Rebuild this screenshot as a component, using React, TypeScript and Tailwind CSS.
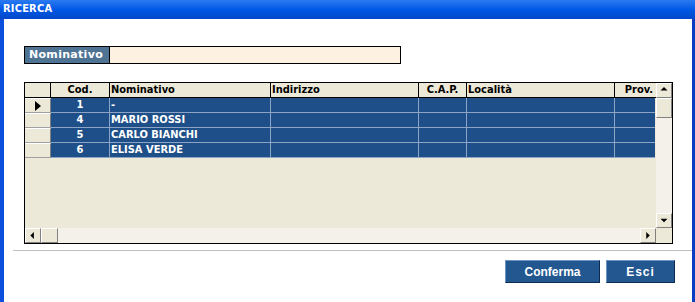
import React from 'react';

interface Row {
  cod: string;
  nome: string;
}

const rows: Row[] = [
  { cod: '1', nome: '-' },
  { cod: '4', nome: 'MARIO ROSSI' },
  { cod: '5', nome: 'CARLO BIANCHI' },
  { cod: '6', nome: 'ELISA VERDE' },
];

const font = { fontFamily: '"DejaVu Sans Condensed", "DejaVu Sans", sans-serif' };

function ScrollButton({ dir }: { dir: 'up' | 'down' | 'left' | 'right' }) {
  const tri =
    dir === 'up'
      ? 'M4 7 L8 3 L12 7 Z'
      : dir === 'down'
      ? 'M4 5 L12 5 L8 9 Z'
      : dir === 'left'
      ? 'M9 3 L9 11 L5 7 Z'
      : 'M6 3 L6 11 L10 7 Z';
  return (
    <div className="w-[16px] h-[15px] shrink-0 bg-[#ece9d8] border-t border-l border-t-white border-l-white border-b border-r border-b-[#808080] border-r-[#808080]">
      <svg width="14" height="13" viewBox="0 0 16 14">
        <path d={tri} fill="#000" />
      </svg>
    </div>
  );
}

export default function App() {
  return (
    <div className="w-[695px] h-[302px] bg-white flex flex-col overflow-hidden" style={font}>
      {/* title bar */}
      <div className="h-[19px] shrink-0 bg-gradient-to-b from-[#2a7af0] via-[#0058e6] to-[#0048c8] flex items-center pl-[3px]">
        <span className="text-white text-[11px] font-bold tracking-[0.2px]">RICERCA</span>
      </div>

      <div className="flex-1 flex">
        <div className="w-[4px] bg-[#0b4fdc]" />
        <div className="flex-1 flex flex-col">
          {/* search field */}
          <div className="mt-[27px] ml-[20px] flex h-[18px]">
            <div
              className="w-[86px] bg-[#4f7393] border border-black text-white text-[11px] font-bold flex items-center pl-[4px] tracking-[0.3px]"
              style={{ fontFamily: '"DejaVu Sans", sans-serif' }}
            >
              Nominativo
            </div>
            <div className="w-[291px] bg-[#fdf2e2] border border-l-0 border-black" />
          </div>

          {/* grid */}
          <div className="mt-[18px] ml-[20px] w-[649px] h-[162px] border border-black flex flex-col bg-[#ece9d8]">
            <div className="flex h-[146px]">
              <div className="flex-1 flex flex-col text-[11px] font-bold">
                <div className="flex h-[15px] border-b border-black">
                  <div className="w-[26px] border-r border-black" />
                  <div className="w-[59px] border-r border-black text-center leading-[14px]">Cod.</div>
                  <div className="w-[161px] border-r border-black pl-[1px] leading-[14px]">Nominativo</div>
                  <div className="w-[148px] border-r border-black pl-[1px] leading-[14px]">Indirizzo</div>
                  <div className="w-[48px] border-r border-black text-center leading-[14px]">C.A.P.</div>
                  <div className="w-[148px] border-r border-black pl-[1px] leading-[14px]">Località</div>
                  <div className="w-[40px] text-right pr-[2px] leading-[14px]">Prov.</div>
                </div>
                {rows.map((r, i) => (
                  <div key={r.cod} className="flex h-[15px]">
                    <div className="w-[26px] bg-[#ece9d8] border-t border-t-white border-b border-b-[#a0a0a0] border-r border-r-[#808080] flex items-center justify-center">
                      {i === 0 && (
                        <svg width="8" height="10" viewBox="0 0 8 10">
                          <path d="M1 0 L7 5 L1 10 Z" fill="#000" />
                        </svg>
                      )}
                    </div>
                    <div className="w-[59px] bg-[#1f4f88] text-white text-center border-r border-b border-[#8ea4c4] leading-[14px]">
                      {r.cod}
                    </div>
                    <div className="w-[161px] bg-[#1f4f88] text-white pl-[1px] border-r border-b border-[#8ea4c4] leading-[14px]">
                      {r.nome}
                    </div>
                    <div className="w-[148px] bg-[#1f4f88] border-r border-b border-[#8ea4c4]" />
                    <div className="w-[48px] bg-[#1f4f88] border-r border-b border-[#8ea4c4]" />
                    <div className="w-[148px] bg-[#1f4f88] border-r border-b border-[#8ea4c4]" />
                    <div className="w-[40px] bg-[#1f4f88] border-b border-[#8ea4c4]" />
                  </div>
                ))}
              </div>
              {/* vertical scrollbar */}
              <div className="w-[16px] flex flex-col bg-[#f3f1ea]">
                <ScrollButton dir="up" />
                <div className="h-[20px] bg-[#ece9d8] border-t border-l border-t-white border-l-white border-b border-r border-b-[#808080] border-r-[#808080]" />
                <div className="flex-1" />
                <ScrollButton dir="down" />
              </div>
            </div>
            {/* horizontal scrollbar */}
            <div className="flex h-[15px] bg-[#f3f1ea]">
              <ScrollButton dir="left" />
              <div className="w-[17px] bg-[#ece9d8] border-t border-l border-t-white border-l-white border-b border-r border-b-[#808080] border-r-[#808080]" />
              <div className="flex-1" />
              <ScrollButton dir="right" />
              <div className="w-[16px] bg-[#ece9d8]" />
            </div>
          </div>

          {/* separator */}
          <div className="mt-[6px] ml-[9px] h-px bg-[#c0c0c0]" />

          {/* buttons */}
          <div className="mt-[9px] flex justify-end gap-[6px] pr-[17px]">
            <button
              className="w-[95px] h-[23px] bg-[#235790] border border-t-[#6e93c2] border-l-[#6e93c2] border-b-[#0f2b50] border-r-[#0f2b50] text-white text-[12px] font-bold"
              style={{ fontFamily: '"Liberation Sans", Arial, sans-serif' }}
            >
              Conferma
            </button>
            <button
              className="w-[69px] h-[23px] bg-[#235790] border border-t-[#6e93c2] border-l-[#6e93c2] border-b-[#0f2b50] border-r-[#0f2b50] text-white text-[12px] font-bold tracking-[1px]"
              style={{ fontFamily: '"Liberation Sans", Arial, sans-serif' }}
            >
              Esci
            </button>
          </div>
        </div>
        <div className="w-[3px] bg-[#0a3cc4]" />
      </div>
    </div>
  );
}
